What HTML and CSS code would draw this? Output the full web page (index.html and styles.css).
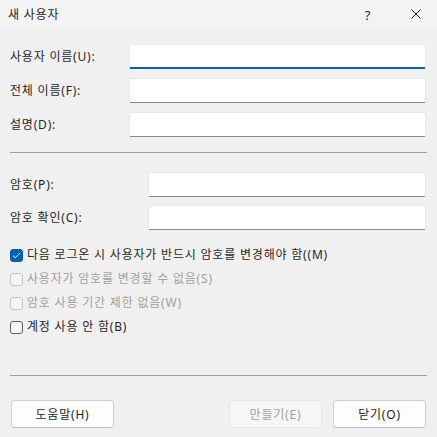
FILE: index.html
```html
<!DOCTYPE html>
<html lang="ko">
<head>
<meta charset="UTF-8" />
<meta name="viewport" content="width=device-width, initial-scale=1.0"/>
<link rel="stylesheet" href="styles.css">
</head>
<body>

<div class="dialog">
  <!-- 제목 표시줄 -->
  <div class="titlebar">
    <span class="titlebar__text">새 사용자</span>
    <span class="titlebar__help">?</span>
    <span class="titlebar__close">
      <svg width="10" height="10" viewBox="0 0 10 10">
        <path d="M0.5 0.5 L9.5 9.5 M9.5 0.5 L0.5 9.5" stroke="#1a1a1a" stroke-width="1" fill="none"/>
      </svg>
    </span>
  </div>

  <div class="content">
    <div class="fields fields--user">
      <label class="field__label">사용자 이름(U):</label>
      <div class="field__input field__input--focus"></div>
      <label class="field__label">전체 이름(F):</label>
      <div class="field__input"></div>
      <label class="field__label">설명(D):</label>
      <div class="field__input"></div>
    </div>

    <hr class="separator separator--top">

    <div class="fields fields--pass">
      <label class="field__label">암호(P):</label>
      <div class="field__input"></div>
      <label class="field__label">암호 확인(C):</label>
      <div class="field__input"></div>
    </div>

    <div class="checks">
      <div class="check">
        <span class="check__box check__box--on">
          <svg width="9" height="7" viewBox="0 0 9 7">
            <path d="M1 3.6 L3.3 5.8 L8 1" stroke="#fff" stroke-width="1" fill="none"/>
          </svg>
        </span>
        <span class="check__text">다음 로그온 시 사용자가 반드시 암호를 변경해야 함((M)</span>
      </div>
      <div class="check check--disabled">
        <span class="check__box"></span>
        <span class="check__text">사용자가 암호를 변경할 수 없음(S)</span>
      </div>
      <div class="check check--disabled">
        <span class="check__box"></span>
        <span class="check__text">암호 사용 기간 제한 없음(W)</span>
      </div>
      <div class="check">
        <span class="check__box"></span>
        <span class="check__text">계정 사용 안 함(B)</span>
      </div>
    </div>

    <hr class="separator separator--bottom">

    <div class="buttons">
      <button class="btn">도움말(H)</button>
      <span class="buttons__spacer"></span>
      <button class="btn btn--disabled">만들기(E)</button>
      <button class="btn btn--close">닫기(O)</button>
    </div>
  </div>
</div>

</body>
</html>
```

FILE: styles.css
```css
:root {
  --bg: #f0f0f0;
  --title-bg: #f3f3f3;
  --text: #262626;
  --disabled: #a0a0a0;
  --accent: #005fb8;
  --line: #a0a0a0;
}

* {
  box-sizing: border-box;
}

body {
  margin: 0;
  background: var(--bg);
  font-family: "Noto Sans", "Noto Sans CJK KR", sans-serif;
  font-size: 12px;
  letter-spacing: 0.8px;
  color: var(--text);
}

.dialog {
  width: 437px;
  height: 437px;
  overflow: hidden;
}

/* 제목 표시줄 */
.titlebar {
  height: 29px;
  background: var(--title-bg);
  display: flex;
  align-items: center;
}

.titlebar__text {
  margin-left: 8px;
  flex: 1;
  line-height: 16px;
}

.titlebar__help {
  width: 12px;
  text-align: center;
  margin-right: 37px;
  font-size: 13px;
  line-height: 16px;
}

.titlebar__close {
  display: flex;
  margin-right: 16px;
  margin-top: -1px;
}

.content {
  padding: 15px 10px 0 10px;
}

/* 입력 필드 */
.fields {
  display: grid;
  align-items: center;
}

.fields--user {
  grid-template-columns: 119px 1fr;
  row-gap: 9px;
  margin-right: 1px;
}

.fields--pass {
  grid-template-columns: 138px 1fr;
  row-gap: 8px;
  margin-right: 1px;
}

.field__label {
  line-height: 16px;
  padding-top: 1px;
}

.field__input {
  height: 25px;
  background: #fff;
  border: 1px solid #e8e8e8;
  border-bottom: 1px solid #8a8a8a;
  border-radius: 3px 3px 2px 2px;
}

.field__input--focus {
  border-color: #ececec;
  border-bottom: 2px solid var(--accent);
}

.separator {
  border: none;
  height: 1px;
  background: var(--line);
  margin: 0;
}

.separator--top {
  margin-top: 15px;
  margin-bottom: 19px;
}

/* 체크박스 */
.checks {
  margin-top: 13px;
}

.check {
  height: 24px;
  display: flex;
  align-items: center;
}

.check__box {
  width: 13px;
  height: 13px;
  border: 1px solid #5c5c5c;
  border-radius: 3px;
  background: #f7f7f7;
  display: flex;
  align-items: center;
  justify-content: center;
  margin-right: 4px;
  flex: none;
}

.check__box--on {
  background: var(--accent);
  border-color: var(--accent);
}

.check--disabled .check__box {
  border-color: #c6c6c6;
  background: #f5f5f5;
}

.check--disabled .check__text {
  color: var(--disabled);
}

.check__text {
  line-height: 16px;
}

.separator--bottom {
  margin-top: 36px;
}

/* 버튼 */
.buttons {
  display: flex;
  margin-top: 24px;
  gap: 11px;
}

.buttons__spacer {
  flex: 1;
}

.btn {
  height: 28px;
  width: 93px;
  font-family: inherit;
  font-size: 12px;
  letter-spacing: inherit;
  color: var(--text);
  background: #fdfdfd;
  border: 1px solid #d0d0d0;
  border-bottom-color: #c0c0c0;
  border-radius: 4px;
  padding: 0;
}

.buttons .btn:first-child {
  width: 103px;
  margin-left: 1px;
}

.btn--disabled {
  color: var(--disabled);
  background: #f6f6f6;
  border-color: #e6e6e6;
}

.btn--close {
  margin-right: 1px;
}
```
